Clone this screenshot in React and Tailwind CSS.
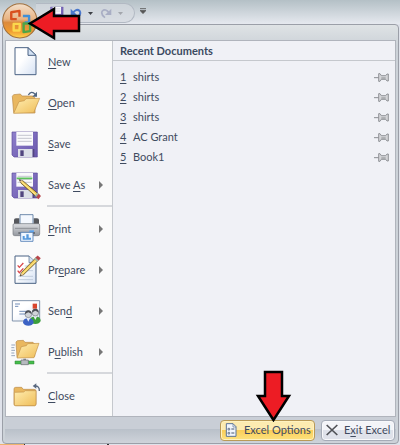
import { clsx } from 'clsx'

const Pencil = () => (
  <g>
    <path d="M0 0l13 4 60 51-9 10L6 13z" fill="#f4ce58" stroke="#3d3524" strokeWidth="2.5" />
    <path d="M9 9l57 51" stroke="#fff0a8" strokeWidth="3" />
    <path d="M0 0l12 4-6 8z" fill="#e8c9a0" />
    <path d="M0 0l6 2-3 4z" fill="#222" />
    <path d="M58 60l9-11 6 5-9 12z" fill="#9fb3a8" />
    <path d="M63 66l10-13 8 8-9 12z" fill="#b8454a" />
  </g>
)

const Floppy = ({ green }) => (
  <g>
    <path d="M3 12h76v75H9l-6-6z" fill="url(#violet)" stroke="#5b4a9c" strokeWidth="2" />
    <path d="M16 12h50v41H16z" fill="#fafafc" />
    <path d="M20 22h42M20 31h42M20 40h42" stroke="#b9bcc6" strokeWidth="2.5" />
    {green && <path d="M17 28h47" stroke="#5cc25c" strokeWidth="5" />}
    <path d="M21 63h44v24H21z" fill="#dcdfe8" />
    <path d="M28 67h10v17H28z" fill="#51457f" />
    <path d="M65 63h5v24h-5z" fill="#51457f" />
  </g>
)

const Person = ({ x, y, color }) => (
  <g>
    <path d={`M${x - 16} ${y + 25}q0-13 16-14q16 1 16 14q-4 9-16 9t-16-9z`} fill={color} />
    <path d={`M${x - 6} ${y + 10}l6 12 6-12z`} fill="#e8eef8" />
    <circle cx={x} cy={y} r="10" fill="#cfd3d8" stroke="#555b63" strokeWidth="1.5" />
    <path d={`M${x - 10} ${y}q0-12 10-12t10 12q-5-5-10-6-4 2-10 6z`} fill="#4b4f57" />
  </g>
)

const DRAWINGS = {
  new: (
    <g>
      <path d="M12 5h39l24 23v58H12z" fill="url(#paper)" stroke="#4b6384" strokeWidth="3" />
      <path d="M51 5v23h24z" fill="#d3e1f3" stroke="#4b6384" strokeWidth="3" />
    </g>
  ),
  open: (
    <g>
      <path d="M8 77L4 28l4-5 20-2 5 6h34l5 6v45z" fill="#e9b75f" stroke="#b98947" strokeWidth="2" />
      <path d="M8 79l16-35 16-3 5-6 41-1-18 43z" fill="url(#folder)" stroke="#c3924a" strokeWidth="2" />
      <path d="M52 24q9-15 21-2" fill="none" stroke="#4f6580" strokeWidth="4" />
      <path d="M78 14v15H64z" fill="#4f6580" />
    </g>
  ),
  save: <Floppy />,
  saveAs: (
    <g>
      <Floppy green />
      <g transform="translate(25 32) scale(0.8)">
        <Pencil />
      </g>
    </g>
  ),
  print: (
    <g>
      <path d="M9 21q0-5 6-5h10v18H9zM68 16h10q6 0 6 5v13H68z" fill="#56585d" />
      <path d="M27 5h39v29H27z" fill="#f4f8fe" stroke="#53739c" strokeWidth="2.5" />
      <path d="M6 36q0-4 4-4h72q4 0 4 4v27q0 5-5 5H11q-5 0-5-5z" fill="url(#steel)" stroke="#75787e" strokeWidth="2" />
      <path d="M12 46h68" stroke="#8d9096" strokeWidth="3" />
      <path d="M55 52h14v5H55z" fill="#5da5f0" />
      <path d="M22 60h50" stroke="#55585e" strokeWidth="4" />
      <path d="M29 58h37v27H29z" fill="#eef6ff" stroke="#4f7cb4" strokeWidth="2.5" />
      <path d="M35 80V69h6v7h5V64h7v10h7v6z" fill="#5599dd" />
    </g>
  ),
  prepare: (
    <g>
      <path d="M12 6h42l21 20v62H12z" fill="url(#paper)" stroke="#4b6384" strokeWidth="3" />
      <path d="M54 6v20h21" fill="#d3e1f3" stroke="#4b6384" strokeWidth="2" />
      <path d="M20 34l5 6 12-13M20 50l5 6 12-13" fill="none" stroke="#d9484c" strokeWidth="4" />
      <path d="M41 36h18M41 50h25M22 67h44M22 77h44" stroke="#b9c5d6" strokeWidth="2.5" />
      <g transform="translate(27 66) rotate(-86) scale(0.8)">
        <Pencil />
      </g>
    </g>
  ),
  send: (
    <g>
      <path d="M4 17h82v61H4z" fill="url(#paper)" stroke="#8193ab" strokeWidth="3" />
      <path d="M65 26h13v15H65z" fill="#d9442c" />
      <path d="M12 27h15M12 34h10M25 49h28M25 57h18" stroke="#5577aa" strokeWidth="2.5" />
      <Person x={73} y={53} color="#3c9f3c" />
      <Person x={52} y={58} color="#3b62c4" />
    </g>
  ),
  publish: (
    <g>
      <path d="M1 27h11M1 35h9M1 43h11M1 51h9M1 59h11" stroke="#8394ad" strokeWidth="2.5" />
      <path d="M18 64L15 18l4-4 18-1 5 6h24l5 5v37z" fill="#e9b75f" stroke="#b98947" strokeWidth="2" />
      <path d="M18 66l13-34 15-3 4-6 34-1-15 43z" fill="url(#folder)" stroke="#c3924a" strokeWidth="2" />
      <path d="M37 68h8v10h-8z" fill="#888d94" />
      <path d="M12 75h57v9H12z" fill="#45bd4b" stroke="#2c8034" strokeWidth="1.5" />
      <path d="M30 72h22v14H30z" fill="#b6babf" stroke="#666a70" strokeWidth="2" />
    </g>
  ),
  close: (
    <g>
      <path d="M9 27q0-5 5-5h18l5 6h32q6 0 6 5v40q0 4-4 4H13q-4 0-4-4z" fill="#e9b75f" stroke="#b98947" strokeWidth="2" />
      <path d="M10 37l28-1 5-4h32v41l-4 4H13l-3-4z" fill="url(#folder)" stroke="#c3924a" strokeWidth="2" />
      <path d="M71 18q15-1 14 15" fill="none" stroke="#5a6980" strokeWidth="4" />
      <path d="M65 18l11-8v16z" fill="#5a6980" />
    </g>
  ),
}

const MENU = [
  { id: 'new', label: ['', 'N', 'ew'] },
  { id: 'open', label: ['', 'O', 'pen'] },
  { id: 'save', label: ['', 'S', 'ave'] },
  { id: 'saveAs', label: ['Save ', 'A', 's'], sub: true, divider: true },
  { id: 'print', label: ['', 'P', 'rint'], sub: true },
  { id: 'prepare', label: ['Pr', 'e', 'pare'], sub: true },
  { id: 'send', label: ['Sen', 'd', ''], sub: true },
  { id: 'publish', label: ['P', 'u', 'blish'], sub: true, divider: true },
  { id: 'close', label: ['', 'C', 'lose'] },
]

const RECENT = ['shirts', 'shirts', 'shirts', 'AC Grant', 'Book1']

// Shared gradients for the menu drawings
const Gradients = () => (
  <svg className="absolute size-0" aria-hidden="true">
    <defs>
      <linearGradient id="paper" x1="0" y1="0" x2="1" y2="1">
        <stop offset="0.4" stopColor="#ffffff" />
        <stop offset="1" stopColor="#d5e1f3" />
      </linearGradient>
      <linearGradient id="folder" x1="0" y1="0" x2="1" y2="1">
        <stop offset="0" stopColor="#ffedb0" />
        <stop offset="1" stopColor="#efbd58" />
      </linearGradient>
      <linearGradient id="violet" x1="0" y1="0" x2="1" y2="1">
        <stop offset="0" stopColor="#8f80cc" />
        <stop offset="1" stopColor="#6856ac" />
      </linearGradient>
      <linearGradient id="steel" x1="0" y1="0" x2="0" y2="1">
        <stop offset="0" stopColor="#dcdee2" />
        <stop offset="1" stopColor="#94989f" />
      </linearGradient>
      <linearGradient id="orb" x1="0" y1="0" x2="0" y2="1">
        <stop offset="0" stopColor="#f3e0cc" />
        <stop offset="0.45" stopColor="#e9b483" />
        <stop offset="0.55" stopColor="#dc8a3c" />
        <stop offset="0.8" stopColor="#f09a30" />
        <stop offset="1" stopColor="#ffd84f" />
      </linearGradient>
    </defs>
  </svg>
)

const Label = ({ parts }) => (
  <span className="whitespace-pre">
    {parts[0]}
    <span className="underline underline-offset-2">{parts[1]}</span>
    {parts[2]}
  </span>
)

const Pin = () => (
  <svg viewBox="0 0 45 27" className="h-[9px] w-[15px]">
    <path d="M0 14h14" stroke="#8d8f93" strokeWidth="3" />
    <path d="M14 2h4l4 6h13l4-5h4v21h-4l-4-5H22l-4 6h-4z" fill="#d4d5d8" stroke="#828489" strokeWidth="2.5" />
    <path d="M22 15h13" stroke="#8d8f93" strokeWidth="3" />
  </svg>
)

const Caret = ({ className }) => (
  <svg viewBox="0 0 5 3" className={clsx('h-[3px] w-[5px]', className)}>
    <path d="M0 0h5L2.5 3z" fill="currentColor" />
  </svg>
)

const TOOL = 'flex h-4 items-center justify-center'

function TitleBar() {
  return (
    <header className="relative flex h-6 items-start bg-linear-to-b from-[#b4c0c6] to-[#e6e9ef] pl-9 pt-[3px]">
      <div className="flex h-5 w-[99px] items-center rounded-r-full border border-l-0 border-[#b2b9c3] bg-[#d5dae0]/70 pl-[14px]">
        <button className={clsx(TOOL, 'w-4')} aria-label="Save">
          <svg viewBox="0 0 96 96" className="size-4">
            <Floppy />
          </svg>
        </button>
        <button className={clsx(TOOL, 'ml-1 w-3')} aria-label="Undo">
          <svg viewBox="0 0 36 36" className="size-3">
            <path d="M8 18Q20 3 29 12q6 9-8 20" fill="none" stroke="#4a78cc" strokeWidth="6" />
            <path d="M2 5v19h19z" fill="#4a78cc" />
          </svg>
        </button>
        <button className={clsx(TOOL, 'ml-1 w-2')} aria-label="Undo history">
          <Caret className="text-[#3c3f45]" />
        </button>
        <button className={clsx(TOOL, 'ml-[6px] w-3')} aria-label="Redo">
          <svg viewBox="0 0 36 36" className="size-3">
            <path d="M28 18Q16 3 7 12q-6 9 8 20" fill="none" stroke="#a9aec4" strokeWidth="5" />
            <path d="M34 5v19H15z" fill="#a9aec4" />
          </svg>
        </button>
        <button className={clsx(TOOL, 'ml-1 w-2')} aria-label="Redo history">
          <Caret className="text-[#a3a6ac]" />
        </button>
      </div>
      <button className={clsx(TOOL, 'w-4')} aria-label="Customize toolbar">
        <svg viewBox="0 0 15 15" className="size-[6px]">
          <path d="M0 1.500h15M0 6h15L7.500 14z" fill="#555" stroke="#555" strokeWidth="2" />
        </svg>
      </button>

      <button className="absolute left-[2px] top-[3px] z-10" aria-label="Office Button">
        <svg viewBox="0 0 105 105" className="size-9">
          <circle cx="52" cy="52" r="50" fill="url(#orb)" stroke="#a1713f" strokeWidth="3" />
          <g fill="none" strokeWidth="7" strokeLinejoin="round">
            <path d="M43 47H27V27l24-4v17" stroke="#d9501e" />
            <path d="M61 38h18v19H66" stroke="#3f8fd8" />
            <path d="M52 61H34v19h17z" stroke="#fbd84c" />
            <path d="M63 60h19v22l-19 3z" stroke="#4da548" />
          </g>
        </svg>
      </button>
      <svg viewBox="0 0 54 34" className="absolute left-[27px] top-[6px] z-20 h-[34px] w-[54px]">
        <path d="M3 17.500L27 3v7h25v15H27v7z" fill="#ed1c24" stroke="#000" strokeWidth="2.5" />
      </svg>
    </header>
  )
}

function Commands() {
  return (
    <nav className="w-[107px] shrink-0 border-r border-[#c5c8cd] bg-[#fafafa]">
      {MENU.map((m) => (
        <div key={m.id}>
          <button className="flex h-[41px] w-full items-center pl-[5px] text-left">
            <svg viewBox="0 0 96 96" className="size-8 shrink-0">
              {DRAWINGS[m.id]}
            </svg>
            <span className="ml-[5px] flex-1">
              <Label parts={m.label} />
            </span>
            {m.sub && (
              <svg viewBox="0 0 4 8" className="mr-[9px] h-2 w-1">
                <path d="M0 0l4 4-4 4z" fill="#777" />
              </svg>
            )}
          </button>
          {m.divider && <div className="ml-[41px] h-[3px] border-t-2 border-[#d6d8dc]" />}
        </div>
      ))}
    </nav>
  )
}

function RecentDocuments() {
  return (
    <section className="flex-1 bg-[#f0f1f6]">
      <h2 className="h-5 border-b border-[#c5c8cd] pl-[7px] font-bold leading-5 text-[#3b4a61]">Recent Documents</h2>
      <ol className="pt-[6px]">
        {RECENT.map((name, i) => (
          <li key={i}>
            <button className="flex h-5 w-full items-center pl-[7px] pr-[6px] text-left">
              <span className="w-[13px]">
                <span className="underline underline-offset-2">{i + 1}</span>
              </span>
              <span className="flex-1">{name}</span>
              <Pin />
            </button>
          </li>
        ))}
      </ol>
    </section>
  )
}

function Footer() {
  return (
    <footer className="flex h-[26px] items-center justify-end gap-[6px] rounded-b bg-linear-to-b from-[#c9ced6] from-45% via-[#b9c0c9] via-45% to-[#ced3da] pr-px">
      <div className="relative">
        <button className="flex h-[21px] w-[95px] items-center rounded-sm border border-[#b99a57] bg-linear-to-b from-[#fdebb0] from-45% via-[#fbce58] via-50% to-[#fde27e] pl-1 shadow-[inset_0_0_0_1px_#fff2c0]">
          <svg viewBox="0 0 36 42" className="mr-[7px] h-[14px] w-3">
            <path d="M4 2h20l9 9v29H4z" fill="#f3f7fd" stroke="#5b7396" strokeWidth="3" />
            <path d="M24 2v10h9" fill="none" stroke="#5b7396" strokeWidth="2" />
            <path d="M9 16h5v5H9zM9 28h5v5H9z" fill="none" stroke="#44546d" strokeWidth="2" />
            <path d="M19 18h9M19 30h9" stroke="#44546d" strokeWidth="3" />
          </svg>
          <Label parts={['Excel Opt', 'i', 'ons']} />
        </button>
        <svg viewBox="0 0 37 53" className="absolute bottom-[19px] left-[35px] h-[53px] w-[37px]">
          <path d="M18.500 51L3 27h7V3h17v24h7z" fill="#ed1c24" stroke="#000" strokeWidth="2.5" />
        </svg>
      </div>
      <button className="flex h-[21px] w-[74px] items-center rounded-sm border border-[#a5abb7] bg-linear-to-b from-[#f3f4f8] from-45% to-[#dfe2ea] to-50% pl-1 shadow-[inset_0_0_0_1px_#f8f9fb]">
        <svg viewBox="0 0 36 36" className="mr-[6px] size-3">
          <path d="M2 3l32 30M34 3L2 33" stroke="#505257" strokeWidth="5" />
        </svg>
        <Label parts={['E', 'x', 'it Excel']} />
      </button>
    </footer>
  )
}

export default function App() {
  return (
    <div className="bg-[#dfe2ea] font-['Lato',sans-serif] text-[11px] leading-4 text-[#3f4b60]">
      <Gradients />
      <TitleBar />
      <main className="ml-[2px] mr-px rounded border border-[#9b9fa8] bg-linear-to-b from-[#dfe3e5] to-[#ccd2d8] to-5% px-[2px] pt-[15px]">
        <div className="flex border border-[#b0b4bc]">
          <Commands />
          <RecentDocuments />
        </div>
        <Footer />
      </main>
      <div className="flex h-px">
        <div className="w-6 bg-[#eeb36c]" />
        <div className="w-px bg-[#333]" />
        <div className="w-[82px]" />
        <div className="w-[2px] bg-[#333]" />
      </div>
    </div>
  )
}
